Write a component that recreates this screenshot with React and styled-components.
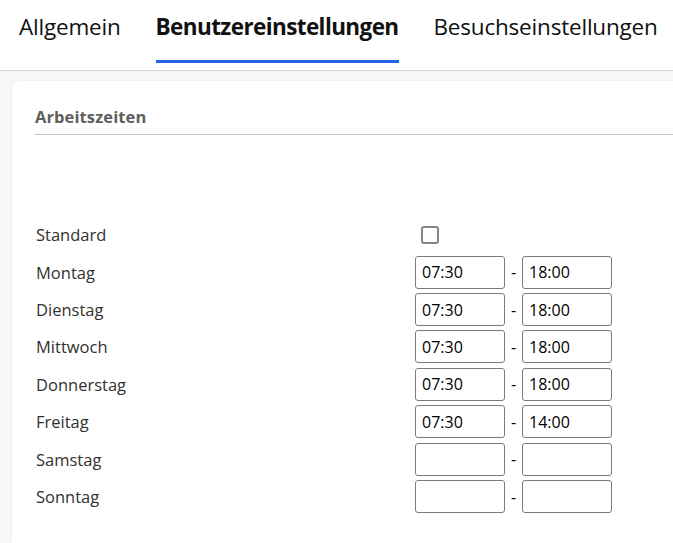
import React from 'react'
import styled, { createGlobalStyle } from 'styled-components'

const GlobalStyle = createGlobalStyle`
html, body {
  margin: 0;
  padding: 0;
  background: #ffffff;
  overflow: hidden;
}
body {
  font-family: "Open Sans", "Noto Sans", sans-serif;
  color: #323130;
}
`

const Page = styled.div`
display: flex;
flex-direction: column;
width: 673px;
height: 543px;
`

const TabBar = styled.div`
display: flex;
flex-direction: row;
align-items: flex-start;
height: 70px;
border-bottom: 1px solid #d6d6d6;
padding-left: 19px;
gap: 35px;
background: #ffffff;
`

const Tab = styled.div`
padding-top: 12px;
height: 48px;
font-size: 22.5px;
line-height: 30px;
letter-spacing: ${({ active }) => active ? '-0.6px' : '-0.2px'};
font-weight: ${({ active }) => active ? 700 : 400};
color: #111111;
white-space: nowrap;
border-bottom: 3px solid ${({ active }) => active ? '#2266e3' : 'transparent'};
`

const Body = styled.div`
flex: 1;
background: #f8f7f6;
padding: 10px 0 0 12px;
display: flex;
`

const Card = styled.div`
flex: 1;
margin-right: -20px;
background: #ffffff;
border-radius: 7px 0 0 0;
box-shadow: 0 0 2px rgba(0, 0, 0, 0.08);
padding: 24px 0 0 23px;
`

const SectionTitle = styled.div`
font-size: 16.5px;
line-height: 23px;
font-weight: 700;
letter-spacing: 0.1px;
color: #605e5c;
padding-bottom: 6px;
border-bottom: 1px solid #c8c6c4;
`

const Grid = styled.div`
display: grid;
grid-template-columns: 380px auto;
grid-auto-rows: 37.43px;
margin-top: 81px;
align-items: center;
`

const Label = styled.div`
font-size: 16.5px;
color: #323130;
padding-left: 1px;
`

const TimeRange = styled.div`
display: flex;
align-items: center;
`

const TimeInput = styled.input`
width: 90px;
height: 33px;
box-sizing: border-box;
border: 1px solid #7a7a7a;
border-radius: 3px;
padding: 0 6px;
font-family: "Open Sans", sans-serif;
font-size: 16px;
color: #000000;
background: #ffffff;
outline: none;
`

const Dash = styled.span`
width: 17px;
text-align: center;
font-size: 16px;
color: #000000;
`

const Check = styled.span`
display: block;
width: 14px;
height: 14px;
margin-left: 6px;
border: 2px solid #868686;
border-radius: 3px;
background: #ffffff;
`

const days = [
  { name: 'Montag', from: '07:30', to: '18:00' },
  { name: 'Dienstag', from: '07:30', to: '18:00' },
  { name: 'Mittwoch', from: '07:30', to: '18:00' },
  { name: 'Donnerstag', from: '07:30', to: '18:00' },
  { name: 'Freitag', from: '07:30', to: '14:00' },
  { name: 'Samstag', from: '', to: '' },
  { name: 'Sonntag', from: '', to: '' },
]

const App = () => (
  <Page>
    <GlobalStyle />
    <TabBar>
      <Tab>Allgemein</Tab>
      <Tab active>Benutzereinstellungen</Tab>
      <Tab>Besuchseinstellungen</Tab>
    </TabBar>
    <Body>
      <Card>
        <SectionTitle>Arbeitszeiten</SectionTitle>
        <Grid>
          <Label>Standard</Label>
          <div><Check /></div>
          {days.map(day => (
            <React.Fragment key={day.name}>
              <Label>{day.name}</Label>
              <TimeRange>
                <TimeInput defaultValue={day.from} />
                <Dash>-</Dash>
                <TimeInput defaultValue={day.to} />
              </TimeRange>
            </React.Fragment>
          ))}
        </Grid>
      </Card>
    </Body>
  </Page>
)

export default App
